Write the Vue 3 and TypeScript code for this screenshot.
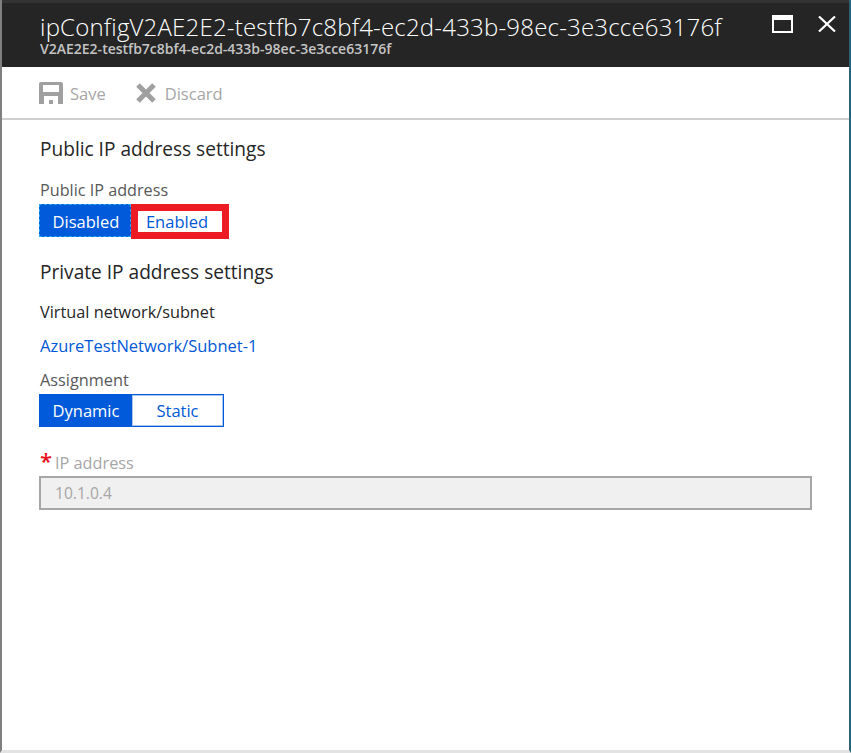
<script setup lang="ts">
const title = 'ipConfigV2AE2E2-testfb7c8bf4-ec2d-433b-98ec-3e3cce63176f'
const subtitle = 'V2AE2E2-testfb7c8bf4-ec2d-433b-98ec-3e3cce63176f'
</script>

<template>
  <div class="blade">
    <header class="head">
      <div class="titles">
        <div class="title">{{ title }}</div>
        <div class="subtitle">{{ subtitle }}</div>
      </div>
      <div class="winbtns">
        <svg width="21" height="18" viewBox="0 0 21 18"><rect x="1" y="1" width="19" height="16" fill="none" stroke="#fff" stroke-width="2" /><rect x="1" y="1" width="19" height="4" fill="#fff" /></svg>
        <svg class="close" width="18" height="16" viewBox="0 0 18 16"><path d="M1 0.5 L17 15.5 M17 0.5 L1 15.5" stroke="#fff" stroke-width="2.2" fill="none" /></svg>
      </div>
    </header>
    <div class="cmdbar">
      <div class="cmd">
        <svg width="24" height="22" viewBox="0 0 24 22"><path fill="#a0a0a0" fill-rule="evenodd" d="M0 2 Q0 0 2 0 H22 Q24 0 24 2 V22 H0 Z M4 3 V10 H20 V3 Z M5 14 V22 H19 V14 Z" /><rect x="10" y="18" width="4" height="4" fill="#a0a0a0" /></svg>
        <span>Save</span>
      </div>
      <div class="cmd wide">
        <svg width="20" height="20" viewBox="0 0 20 20"><path d="M2 2 L18 18 M18 2 L2 18" stroke="#a0a0a0" stroke-width="5" fill="none" /></svg>
        <span>Discard</span>
      </div>
    </div>
    <main class="body">
      <h2 class="section first">Public IP address settings</h2>
      <div class="label pub">Public IP address</div>
      <div class="toggle">
        <div class="opt on focus">Disabled</div>
        <div class="opt marked">Enabled</div>
      </div>
      <h2 class="section second">Private IP address settings</h2>
      <div class="label dark vnet">Virtual network/subnet</div>
      <a class="link">AzureTestNetwork/Subnet-1</a>
      <div class="label assign">Assignment</div>
      <div class="toggle outlined">
        <div class="opt on">Dynamic</div>
        <div class="opt inner">Static</div>
      </div>
      <div class="label ip"><span class="req">*</span>IP address</div>
      <div class="input">10.1.0.4</div>
    </main>
  </div>
</template>

<style>
html, body { margin: 0; background: #fff; }
</style>

<style scoped>
.blade {
  width: 851px;
  height: 753px;
  box-sizing: border-box;
  display: flex;
  flex-direction: column;
  background: #fff;
  border-left: 2px solid #7f7f7f;
  border-right: 2px solid #2e5f7c;
  border-bottom: 3px solid #e3e3e3;
  font-family: "Open Sans", "Noto Sans", sans-serif;
  font-size: 16.5px;
  color: #252525;
}
.head {
  height: 67px;
  box-sizing: border-box;
  flex: none;
  background: #252525;
  border-top: 3px solid #333;
  padding: 9px 13px 0 38px;
  display: flex;
  justify-content: space-between;
  color: #fff;
}
.title { font-size: 24px; font-weight: 300; line-height: 30px; letter-spacing: 0.2px; white-space: nowrap; }
.subtitle { font-size: 14px; font-weight: 600; line-height: 14px; color: #c4c4c4; white-space: nowrap; }
.winbtns { display: flex; gap: 25px; align-items: flex-start; margin-top: 3px; }
.close { margin-top: 1px; }
.cmdbar {
  height: 53px;
  flex: none;
  box-sizing: border-box;
  border-bottom: 2px solid #cfcfcf;
  padding: 15px 0 0 37px;
  display: flex;
  gap: 30px;
  color: #a6a6a6;
}
.cmd { display: flex; align-items: center; gap: 7px; height: 22px; }
.cmd.wide { gap: 9px; }
.body { padding: 0 37px; flex: 1; }
.section { margin: 0 0 0 1px; font-size: 19.1px; font-weight: 400; line-height: 24px; }
.first { margin-top: 17px; }
.second { margin-top: 23px; }
.label { margin-left: 1px; line-height: 20px; color: #595959; font-size: 16.3px; }
.pub { margin-top: 19px; margin-bottom: 4px; font-size: 16.2px; }
.dark { color: #252525; }
.vnet { margin-top: 18px; }
.link { display: block; margin: 14px 0 0 1px; line-height: 20px; color: #0058d6; }
.assign { margin-top: 14px; margin-bottom: 4px; }
.toggle { display: flex; width: 185px; height: 33px; box-sizing: border-box; }
.opt { flex: 1; display: flex; align-items: center; justify-content: center; box-sizing: border-box; color: #0058d6; }
.opt.on { background: #005ad9; color: #fff; flex: none; width: 92px; }
.focus { outline: 1px dashed #22a7f0; outline-offset: -1px; padding: 2px 0 0 2px; }
.marked { border: 7px solid #ed1c24; height: 35px; flex: none; width: 98px; padding-right: 6px; }
.outlined { border: 1px solid #005ad9; }
.inner { box-shadow: inset 0 0 0 1px #a8c6f0; }
.ip { display: flex; margin-top: 26px; color: #a6a6a6; }
.req { color: #e81123; font-size: 22px; font-weight: 600; line-height: 15px; width: 15px; flex: none; }
.input {
  margin-top: 3px;
  height: 34px;
  box-sizing: border-box;
  background: #f0f0f0;
  border: 2px solid #a6a6a6;
  padding-left: 14px;
  line-height: 30px;
  font-size: 15.6px;
  color: #a6a6a6;
  width: 773px;
}
</style>
